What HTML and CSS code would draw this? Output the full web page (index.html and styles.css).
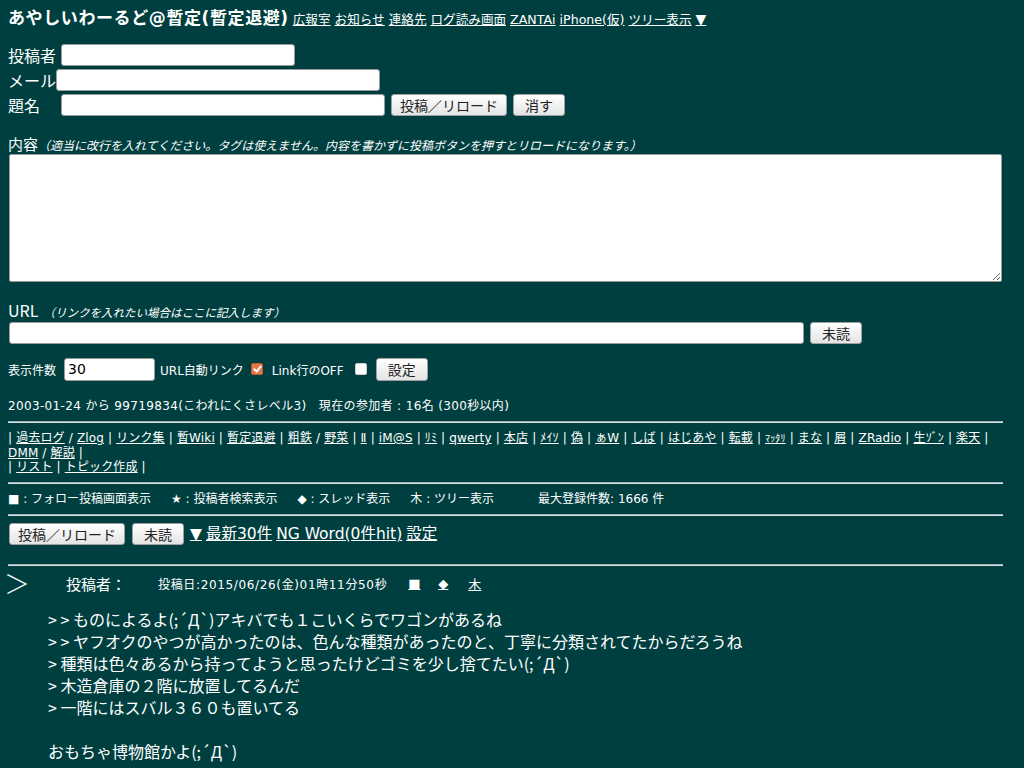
FILE: index.html
```html
<!DOCTYPE html>
<html lang="ja">
<head>
<meta charset="utf-8">
<title>あやしいわーるど@暫定(暫定退避)</title>
<link rel="stylesheet" href="styles.css">
</head>
<body>
<div class="page">
  <div class="top">
    <span class="title">あやしいわーるど@暫定(暫定退避)</span>
    <a href="#">広報室</a> <a href="#">お知らせ</a> <a href="#">連絡先</a> <a href="#">ログ読み画面</a> <a href="#">ZANTAi</a> <a href="#">iPhone(仮)</a> <a href="#">ツリー表示</a> <a href="#" class="tri">▼</a>
  </div>

  <form class="postform">
    <div class="frow"><span class="lbl lbl-name">投稿者</span><input class="in in-name" type="text"></div>
    <div class="frow"><span class="lbl lbl-mail">メール</span><input class="in in-mail" type="text"></div>
    <div class="frow"><span class="lbl lbl-sub">題名</span><input class="in in-sub" type="text"><button type="button" class="btn">投稿／リロード</button><button type="button" class="btn short">消す</button></div>

    <div class="blabel"><span class="big">内容</span><i class="note">（適当に改行を入れてください。タグは使えません。内容を書かずに投稿ボタンを押すとリロードになります。）</i></div>
    <textarea class="body-ta"></textarea>

    <div class="blabel url-label"><span class="big">URL</span> <i class="note note-url">（リンクを入れたい場合はここに記入します）</i></div>
    <div class="frow urlrow"><input class="in in-url" type="text"><button type="button" class="btn short">未読</button></div>

    <div class="frow setrow"><span class="sm">表示件数</span><input class="in in-num" type="text" value="30"><span class="sm">URL自動リンク</span><span class="cb cb-on"></span><span class="sm">Link行のOFF</span><span class="cb cb-off"></span><button type="button" class="btn short">設定</button></div>
  </form>

  <div class="info">2003-01-24 から 99719834(こわれにくさレベル3)　現在の参加者 : 16名 (300秒以内)</div>

  <hr>
  <div class="links">
    | <a href="#">過去ログ</a> / <a href="#">Zlog</a> | <a href="#">リンク集</a> | <a href="#">暫Wiki</a> | <a href="#">暫定退避</a> | <a href="#">粗鉄</a> / <a href="#">野菜</a> | <a href="#">Ⅱ</a> | <a href="#">iM@S</a> | <a href="#">ﾘﾐ</a> | <a href="#">qwerty</a> | <a href="#">本店</a> | <a href="#">ﾒｲｿ</a> | <a href="#">偽</a> | <a href="#">ぁW</a> | <a href="#">しば</a> | <a href="#">はじあや</a> | <a href="#">転載</a> | <a href="#" class="tiny">ﾏｯﾀﾘ</a> | <a href="#">まな</a> | <a href="#">屑</a> | <a href="#">ZRadio</a> | <a href="#">生ｿﾞﾝ</a> | <a href="#">楽天</a> |<br>
    <a href="#">DMM</a> / <a href="#">解説</a> |<br>
    | <a href="#">リスト</a> | <a href="#">トピック作成</a> |
  </div>
  <hr>
  <div class="legend">
    <span>■ : フォロー投稿画面表示</span><span>★ : 投稿者検索表示</span><span>◆ : スレッド表示</span><span>木 : ツリー表示</span><span class="max">最大登録件数: 1666 件</span>
  </div>
  <hr>
  <div class="actions">
    <button type="button" class="btn">投稿／リロード</button><button type="button" class="btn short">未読</button><a href="#">▼</a> <a href="#">最新30件</a> <a href="#">NG Word(0件hit)</a> <a href="#">設定</a>
  </div>
  <hr class="hr-post">

  <div class="post">
    <div class="phead"><span class="gt">＞</span><span class="author">投稿者：</span><span class="date">投稿日:2015/06/26(金)01時11分50秒</span><a href="#">■</a><a href="#">◆</a><a href="#">木</a></div>
    <div class="pbody">&gt; &gt; ものによるよ(;´Д`)アキバでも１こいくらでワゴンがあるね<br>&gt; &gt; ヤフオクのやつが高かったのは、色んな種類があったのと、丁寧に分類されてたからだろうね<br>&gt; 種類は色々あるから持ってようと思ったけどゴミを少し捨てたい(;´Д`)<br>&gt; 木造倉庫の２階に放置してるんだ<br>&gt; 一階にはスバル３６０も置いてる<br><br>おもちゃ博物館かよ(;´Д`)</div>
  </div>
</div>
</body>
</html>
```

FILE: styles.css
```css
html, body {
  margin: 0;
  padding: 0;
  background: #003f3f;
}
body {
  color: #ffffff;
  font-family: "DejaVu Sans", "Noto Sans CJK JP", sans-serif;
}
.page {
  padding: 6px 8px 0 8px;
  width: 995px;
}
a {
  color: #ffffff;
  text-decoration: underline;
}
.top {
  font-size: 12.6px;
  line-height: 24px;
  white-space: nowrap;
}
.title {
  font-size: 17px;
  font-weight: bold;
  letter-spacing: 0.6px;
  margin-right: 0;
}
.tri {
  font-size: 14px;
}
.postform {
  margin-top: 10px;
}
.frow {
  display: flex;
  align-items: center;
  height: 25px;
  font-size: 16px;
}
.lbl {
  line-height: 20px;
  font-family: "Noto Sans CJK JP", sans-serif;
}
.lbl-name { width: 53px; }
.lbl-mail { width: 48px; }
.lbl-sub  { width: 53px; }
.in {
  box-sizing: border-box;
  height: 22px;
  border: 1px solid #9a9a9a;
  border-radius: 3px;
  background: #ffffff;
  padding: 0 3px;
  font-family: "DejaVu Sans", "Noto Sans CJK JP", sans-serif;
  font-size: 14px;
  color: #000;
}
.in-name { width: 234px; }
.in-mail { width: 324px; }
.in-sub  { width: 324px; margin-right: 6px; }
.in-url  { width: 795px; margin-left: 1px; margin-right: 6px; }
.in-num  { width: 91px; height: 23px; margin: 0 5px 0 8px; }
.btn {
  box-sizing: border-box;
  height: 22px;
  padding: 0 8px;
  border: 1px solid #a0a0a0;
  border-radius: 3px;
  background: linear-gradient(#ffffff, #e4e4e4);
  color: #222;
  font-family: "Noto Sans CJK JP", sans-serif;
  font-size: 14px;
  line-height: 18px;
  margin-right: 6px;
}
.btn.short {
  min-width: 52px;
}
.blabel {
  margin-top: 18px;
  line-height: 18px;
  height: 18px;
}
.big {
  font-size: 15px;
  font-family: "Noto Sans CJK JP", sans-serif;
}
.note {
  font-size: 12px;
  font-family: "Noto Sans CJK JP", sans-serif;
}
.note-url {
  font-size: 11.5px;
}
.body-ta {
  display: block;
  box-sizing: border-box;
  width: 993px;
  height: 128px;
  margin: 1px 0 0 1px;
  border: 1px solid #9a9a9a;
  border-radius: 2px;
  background: #ffffff;
  resize: both;
}
.url-label {
  margin-top: 19px;
}
.url-label .big {
  font-size: 16px;
}
.urlrow {
  margin-top: 2px;
  height: 24px;
}
.setrow {
  margin-top: 11px;
  height: 26px;
}
.sm {
  font-size: 12px;
}
.cb {
  box-sizing: border-box;
  width: 12px;
  height: 12px;
  margin: 0 8px 0 7px;
  background: #ffffff;
  border: 1px solid #cfcfcf;
  border-radius: 2px;
}
.cb-on {
  position: relative;
  background: #e2794a;
  border-color: #c65a2c;
  margin-right: 9px;
}
.cb-on::after {
  content: "";
  position: absolute;
  left: 3px;
  top: 0px;
  width: 3px;
  height: 6px;
  border: solid #ffffff;
  border-width: 0 2px 2px 0;
  transform: rotate(40deg);
}
.cb-off {
  margin-left: 11px;
}
.setrow .btn {
  height: 23px;
  margin-left: 1px;
}
.info {
  font-size: 12px;
  margin-top: 15px;
  line-height: 18px;
  letter-spacing: 0.35px;
}
hr {
  margin: 6px 0 0 0;
  height: 0;
  border: 0;
  border-top: 1px solid #9fb5b5;
  border-bottom: 1px solid #d8e2e2;
  width: 995px;
}
.links {
  font-size: 12px;
  line-height: 14px;
  margin-top: 8px;
  letter-spacing: 0.15px;
}
.links .tiny {
  font-size: 10px;
}
.links + hr {
  margin-top: 8px;
}
.legend {
  font-size: 12px;
  line-height: 18px;
  margin-top: 6px;
  display: flex;
}
.legend span {
  margin-right: 20px;
}
.legend .max {
  margin-left: 24px;
}
.legend + hr {
  margin-top: 6px;
}
.actions {
  margin-top: 7px;
  display: flex;
  align-items: center;
  font-size: 15.5px;
  line-height: 22px;
}
.actions a {
  margin-right: 4px;
}
.actions .btn {
  margin-left: 1px;
  margin-right: 6px;
}
.hr-post {
  margin-top: 19px;
}
.phead {
  display: flex;
  align-items: center;
  height: 30px;
  margin-top: 2px;
  font-size: 15px;
}
.gt {
  font-size: 26px;
  width: 58px;
  line-height: 24px;
  font-weight: 300;
  margin-left: -4px;
  margin-right: 4px;
  font-family: "Noto Sans CJK JP", sans-serif;
}
.author {
  width: 92px;
  font-family: "Noto Sans CJK JP", sans-serif;
}
.date {
  font-size: 12px;
  margin-right: 21px;
  letter-spacing: 0.65px;
}
.phead a {
  font-size: 13px;
  width: 30px;
}
.pbody {
  margin: 10px 0 0 40px;
  font-size: 16px;
  line-height: 22px;
  font-family: "Noto Sans CJK JP", sans-serif;
}
```
